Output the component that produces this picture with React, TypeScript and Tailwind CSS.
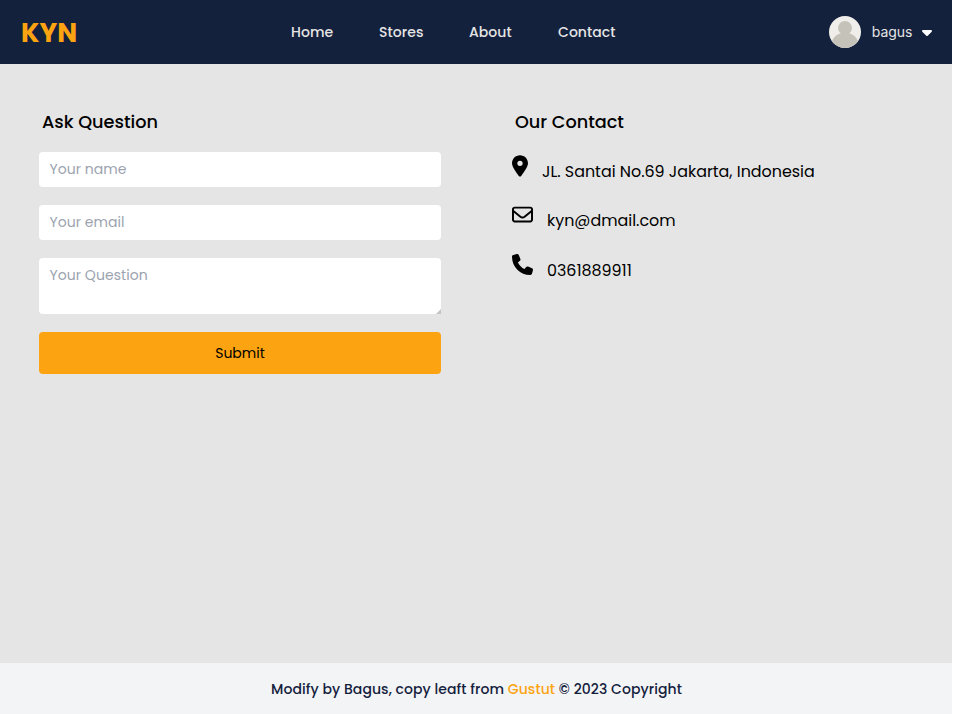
import { FaCaretDown, FaLocationDot, FaPhone, FaRegEnvelope } from "react-icons/fa6";

const links = [
  { label: "Home", width: "w-[42px]" },
  { label: "Stores", width: "w-[44px]" },
  { label: "About", width: "w-[43px]" },
  { label: "Contact", width: "w-[58px]" },
];

const field =
  "block w-full rounded-[4px] bg-white px-[10.5px] text-[14px] tracking-[0.05px] placeholder:text-[#9ca3af] outline-none";

const heading = "h-[44px] pl-[3px] text-[17.7px] leading-[28px] font-medium";

function Avatar() {
  return (
    <svg viewBox="0 0 32 32" className="size-8 rounded-full">
      <rect width="32" height="32" fill="#f0eeea" />
      <path
        d="M16 5a7 7 0 0 1 7 7c0 2.600-1.300 4.300-3 5.300 4.500 1 7.900 4.200 9.100 8.700V32H2.900v-6c1.200-4.500 4.600-7.700 9.100-8.700-1.700-1-3-2.700-3-5.300a7 7 0 0 1 7-7z"
        fill="#c5c2ba"
      />
    </svg>
  );
}

export default function App() {
  return (
    <div className="flex h-[714px] w-[952px] flex-col bg-[#e5e5e5] font-['Poppins','Inter',sans-serif] text-black">
      <header className="flex h-16 items-center bg-[#14213d] pr-[20px] pl-[21px]">
        <a className="w-[270px] pt-px text-[26.5px] font-bold text-[#fca311]">KYN</a>
        <nav className="flex gap-[46px] text-[14px] font-medium tracking-[0.06px] text-[#e5e5e5]">
          {links.map((l) => (
            <a key={l.label} className={"whitespace-nowrap " + l.width}>{l.label}</a>
          ))}
        </nav>
        <div className="ml-auto flex items-center">
          <Avatar />
          <span className="-mt-px ml-[10.500px] font-['Inter',sans-serif] text-[14px] text-[#e5e5e5]">bagus</span>
          <FaCaretDown className="ml-[9.500px] h-4 w-[10px] text-white" />
        </div>
      </header>
      <main className="flex flex-1 pt-[44px] pl-[39px]">
        <form className="w-[402px]">
          <h2 className={heading}>Ask Question</h2>
          <input className={field + " h-[35px]"} placeholder="Your name" />
          <input className={field + " mt-[18px] h-[35px]"} placeholder="Your email" />
          <div className="relative mt-[18px]">
            <textarea className={field + " h-[56px] resize-none pt-[7px] leading-[20px]"} placeholder="Your Question" />
            <svg viewBox="0 0 5 5" className="absolute right-0 bottom-0 size-[5px]">
              <path d="M5 0v5H0z" fill="#c4c4c4" />
            </svg>
          </div>
          <button className="mt-[18px] block h-[42px] w-full rounded-[4px] bg-[#fca311] text-[14px]">Submit</button>
        </form>
        <section className="ml-[71px]">
          <h2 className={heading}>Our Contact</h2>
          <div className="flex h-[50px] gap-[14px]">
            <FaLocationDot className="mt-[3px] h-[22px] w-[16px]" />
            <span className="mt-[8px] text-[15.9px] leading-6">JL. Santai No.69 Jakarta, Indonesia</span>
          </div>
          <div className="flex h-[50px] gap-[14px]">
            <FaRegEnvelope className="mt-[2px] size-[21px]" />
            <span className="mt-[7px] text-[15.9px] leading-6">kyn@dmail.com</span>
          </div>
          <div className="flex h-[50px] gap-[14px]">
            <FaPhone className="mt-[2px] size-[21px]" />
            <span className="mt-[7px] text-[15.9px] leading-6">0361889911</span>
          </div>
        </section>
      </main>
      <footer className="flex h-[51px] items-center justify-center bg-[#f3f4f6] pt-px pl-px text-[14px] font-medium tracking-[0.07px] text-[#14213d]">
        <p>Modify by Bagus, copy leaft from <a className="text-[#fca311]">Gustut</a> © 2023 Copyright</p>
      </footer>
    </div>
  );
}
